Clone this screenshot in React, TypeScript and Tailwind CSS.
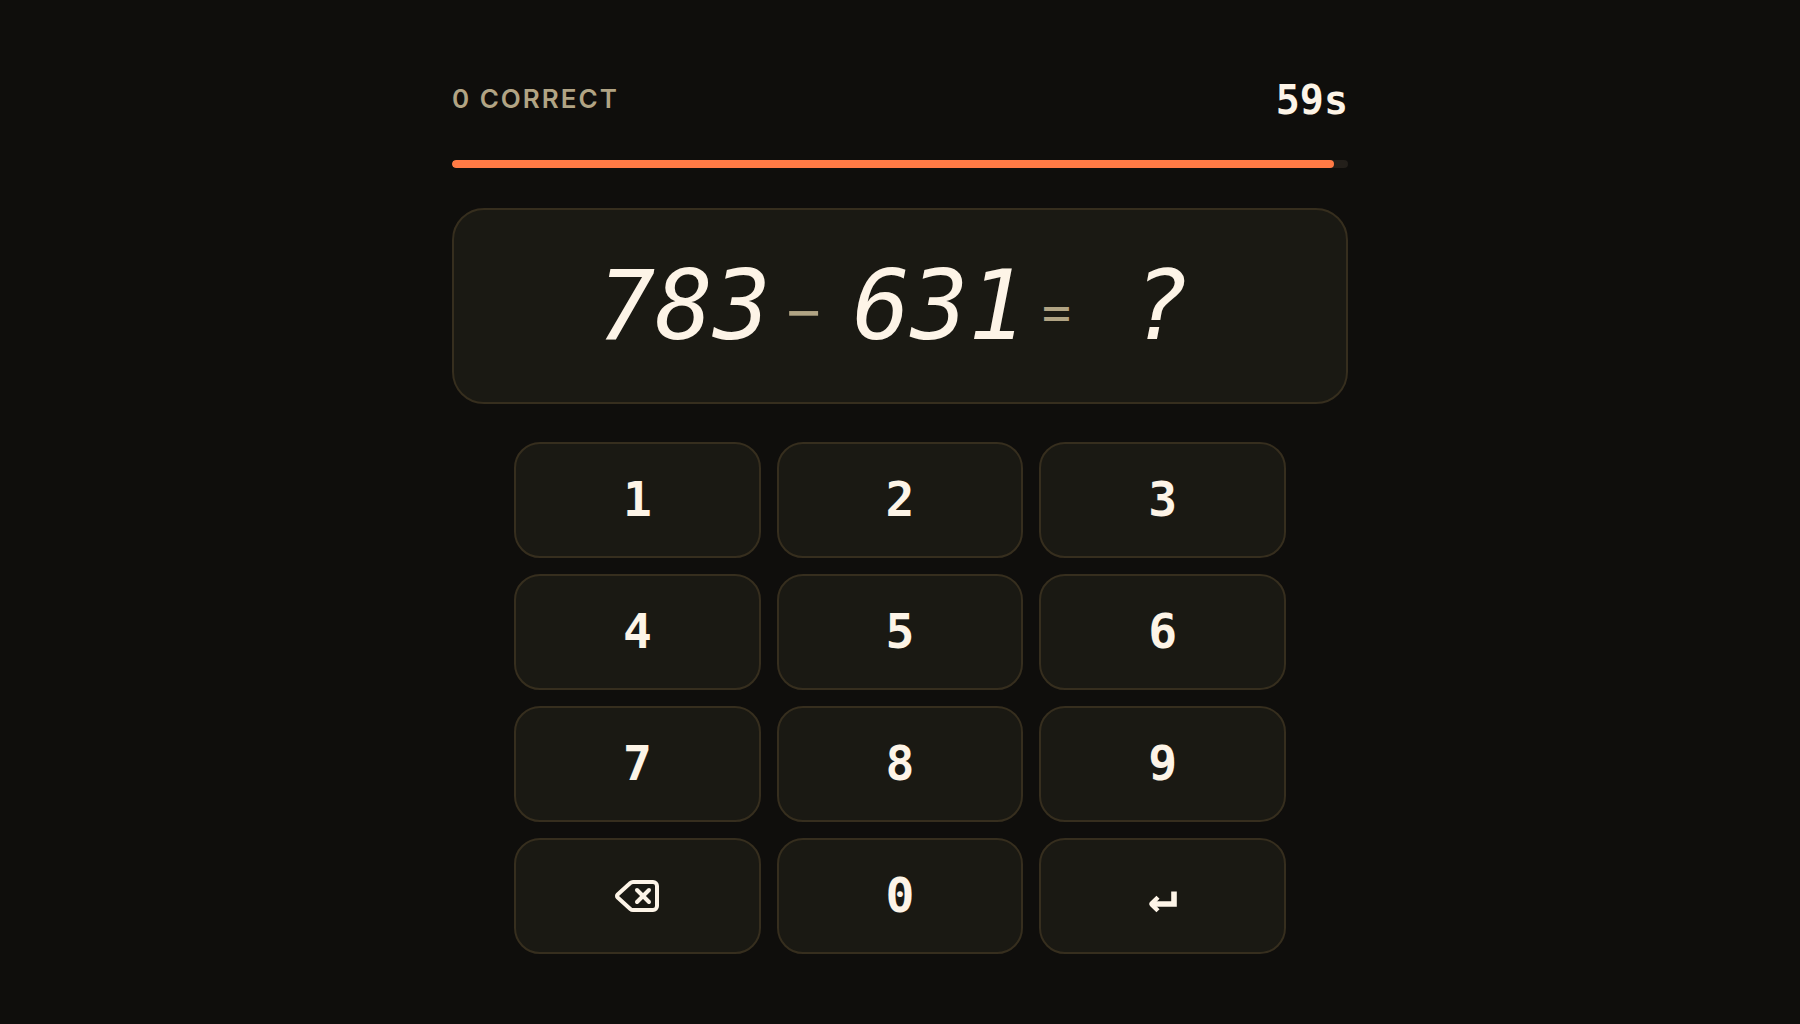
import { useState } from 'react';
import { Delete } from 'lucide-react';

const DIGITS = ['1', '2', '3', '4', '5', '6', '7', '8', '9'];

const keyClass =
  'flex h-29 items-center justify-center rounded-[26px] border-2 border-[#362e1e] bg-[#1a1913] text-[#fdf4e7] hover:bg-[#25231a]';
const digitClass = `${keyClass} pb-0.5 text-5xl leading-none font-bold`;

function EnterIcon() {
  return (
    <svg width="30" height="36" viewBox="0 -12 30 36" fill="none" stroke="currentColor" strokeWidth="5.6" aria-hidden="true">
      <path d="M26 1.5V14H5" />
      <path d="M10 7.2L3.8 13.4Q3.2 14 3.8 14.6L10 20.8" strokeWidth="4.4" />
    </svg>
  );
}

export default function App() {
  const [answer, setAnswer] = useState('');
  const correct = 0;
  const timeLeft = 59;
  const progress = 98.4;

  const press = (digit: string) => setAnswer((prev) => (prev + digit).slice(0, 4));

  return (
    <main className="min-h-screen bg-[#0f0e0c] px-6 pt-20 pb-16 text-[#fdf4e7]">
      <div className="mx-auto w-full max-w-4xl font-['DejaVu_Sans_Mono',monospace]">
        {/* Score and timer */}
        <div className="flex h-10 items-center justify-between">
          <span className="pb-0.5 font-['Inter',sans-serif] text-[26px] leading-9 font-semibold tracking-[2px] text-[#b1a484] uppercase">
            {correct} correct
          </span>
          <span className="text-[40px] leading-10 font-bold">{timeLeft}s</span>
        </div>

        <div className="mt-10 h-2 overflow-hidden rounded-full bg-[#231f1a]">
          <div className="h-full rounded-full bg-[#ff7a45]" style={{ width: `${progress}%` }} />
        </div>

        {/* Question */}
        <div className="mt-10 flex items-center justify-center gap-4 rounded-[32px] border-2 border-[#362e1e] bg-[#1a1913] py-12 text-8xl leading-none">
          <span className="pl-4 italic">783</span>
          <span className="pt-3 text-[56px] leading-none text-[#b1a484]">−</span>
          <span className="pl-4 italic">631</span>
          <span className="pt-3 text-5xl leading-none text-[#b1a484]">=</span>
          <span className="box-content min-w-[2ch] pl-4 text-center italic">{answer || '?'}</span>
        </div>

        {/* Keypad */}
        <div className="mx-auto mt-[38px] grid max-w-[772px] grid-cols-3 gap-4">
          {DIGITS.map((digit) => (
            <button key={digit} type="button" className={digitClass} onClick={() => press(digit)}>
              {digit}
            </button>
          ))}
          <button type="button" className={keyClass} aria-label="Delete" onClick={() => setAnswer((prev) => prev.slice(0, -1))}>
            <Delete size={48} />
          </button>
          <button type="button" className={digitClass} onClick={() => press('0')}>
            0
          </button>
          <button type="button" className={keyClass} aria-label="Enter" onClick={() => setAnswer('')}>
            <EnterIcon />
          </button>
        </div>
      </div>
    </main>
  );
}
